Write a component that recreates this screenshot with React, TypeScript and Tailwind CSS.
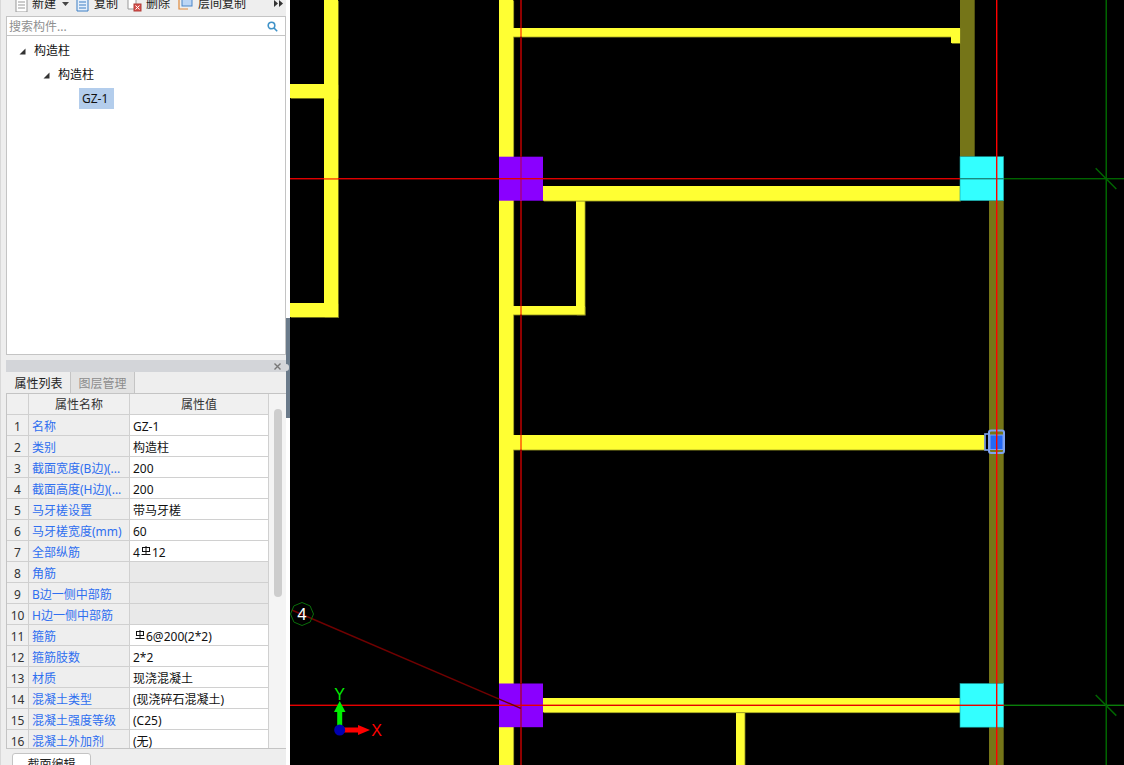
import type { ReactNode } from "react";

// rebar grade mark used in the property values
const Rebar = () => (
    <svg className="inline-block mx-[1px] -mt-[6px]" width="10" height="10" viewBox="0 0 10 10" fill="none" stroke="#111" strokeWidth="1">
        <rect x="1.5" y="1.5" width="7" height="4" />
        <path d="M5 0v9M0.5 8.5h9" />
    </svg>
);

const rows: { name: string; value?: ReactNode; shaded?: boolean }[] = [
    { name: "名称", value: "GZ-1" },
    { name: "类别", value: "构造柱" },
    { name: "截面宽度(B边)(...", value: "200" },
    { name: "截面高度(H边)(...", value: "200" },
    { name: "马牙槎设置", value: "带马牙槎" },
    { name: "马牙槎宽度(mm)", value: "60" },
    { name: "全部纵筋", value: <>4<Rebar />12</> },
    { name: "角筋", shaded: true },
    { name: "B边一侧中部筋", shaded: true },
    { name: "H边一侧中部筋", shaded: true },
    { name: "箍筋", value: <span className="pl-[1px]"><Rebar />6@200(2*2)</span> },
    { name: "箍筋肢数", value: "2*2" },
    { name: "材质", value: "现浇混凝土" },
    { name: "混凝土类型", value: "(现浇碎石混凝土)" },
    { name: "混凝土强度等级", value: "(C25)" },
    { name: "混凝土外加剂", value: "(无)" },
];

const Expander = () => (
    <svg width="7" height="7" viewBox="0 0 7 7">
        <polygon points="6.5,0.5 6.5,6.5 0.5,6.5" fill="#333" />
    </svg>
);

const Toolbar = () => (
    <div className="h-[16px] bg-[#eeeeee] overflow-hidden relative shrink-0">
        <div className="flex items-center -mt-[5px] h-[17px] pl-[13px] text-[#222]">
            <svg width="14" height="16" viewBox="0 0 14 16" className="mr-[4px]">
                <path d="M2 0h11v16H2z" fill="#fff" stroke="#999" />
                <path d="M4 6h7M4 9h7M4 12h7" stroke="#999" />
                <path d="M0 0h2v3H0z" fill="#e8913a" />
            </svg>
            <span>新建</span>
            <svg width="7" height="4" viewBox="0 0 7 4" className="ml-[6px] mt-[1px]">
                <polygon points="0,0 7,0 3.5,4" fill="#444" />
            </svg>
            <svg width="13" height="16" viewBox="0 0 13 16" className="ml-[7px] mr-[5px]">
                <path d="M1 0h11v15H1z" fill="#e6f0fb" stroke="#3d7fc4" />
                <path d="M3 6h7M3 9h7M3 12h7" stroke="#3d7fc4" />
            </svg>
            <span>复制</span>
            <svg width="15" height="16" viewBox="0 0 15 16" className="ml-[9px] mr-[4px]">
                <path d="M1 0h8v13H1z" fill="#fff" stroke="#999" />
                <rect x="7" y="8" width="7" height="7" fill="#d9534f" stroke="#b03a36" />
                <path d="M8.5 9.5l4 4M12.5 9.5l-4 4" stroke="#fff" />
            </svg>
            <span>删除</span>
            <svg width="15" height="16" viewBox="0 0 15 16" className="ml-[8px] mr-[5px]">
                <path d="M1 3v10h9" fill="none" stroke="#e08a3c" strokeWidth="1.2" />
                <rect x="4" y="0" width="10" height="10" fill="#bcd6f5" stroke="#4a86c8" />
            </svg>
            <span>层间复制</span>
        </div>
        <svg width="9" height="7" viewBox="0 0 9 7" className="absolute left-[273px] top-0">
            <polygon points="0,0 4,3.5 0,7" fill="#333" />
            <polygon points="5,0 9,3.5 5,7" fill="#333" />
        </svg>
    </div>
);

const SearchBox = () => (
    <div className="h-[20px] shrink-0 border border-[#c4c4c4] ml-[5px] bg-white flex items-center justify-between pl-[2px] pr-[7px]">
        <span className="text-[#8f8f8f] pt-[2px]">搜索构件...</span>
        <svg width="11" height="11" viewBox="0 0 11 11" fill="none" stroke="#3f92c8" strokeWidth="1.6">
            <circle cx="4.5" cy="4.5" r="3.3" />
            <path d="M7 7l3.2 3.2" />
        </svg>
    </div>
);

const Tree = () => (
    <div className="h-[319px] shrink-0 ml-[5px] bg-white border-x border-b border-[#c4c4c4] pt-[3px] text-[#111]">
        <div className="flex items-center h-[24px] pl-[12px] gap-[8px]"><Expander /><span>构造柱</span></div>
        <div className="flex items-center h-[24px] pl-[36px] gap-[8px]"><Expander /><span>构造柱</span></div>
        <div className="pl-[72px] pt-[1px]">
            <div className="w-[35px] h-[21px] bg-[#b3cdec] pl-[3px] leading-[21px]">GZ-1</div>
        </div>
    </div>
);

const PropertyPanel = () => (
    <div className="flex-1 min-h-0 mt-[5px] ml-[5px] flex flex-col">
        <div className="h-[12px] shrink-0 bg-[#d3d5d9] flex items-center justify-end pr-[5px]">
            <svg width="7" height="7" viewBox="0 0 7 7" stroke="#777" strokeWidth="1.4">
                <path d="M0.5 0.5l6 6M6.5 0.5l-6 6" />
            </svg>
        </div>
        <div className="h-[22px] shrink-0 flex border-b border-[#c4c4c4] bg-[#eeeeee] pl-[1px]">
            <div className="w-[64px] text-center leading-[24px] text-[#222] border-r border-[#c4c4c4]">属性列表</div>
            <div className="w-[64px] text-center leading-[24px] text-[#8c8c8c] bg-[#e2e2e2] border-r border-[#c4c4c4]">图层管理</div>
        </div>
        <div className="h-[355px] shrink-0 flex border-b border-l border-[#c4c4c4] overflow-hidden">
            <div className="w-[262px] shrink-0">
                <div className="flex h-[21px] border-b border-r border-[#d0d0d0] bg-[#f0f0f0] text-[#333] leading-[22px]">
                    <div className="w-[22px] shrink-0 border-r border-[#d0d0d0]" />
                    <div className="w-[101px] shrink-0 border-r border-[#d0d0d0] text-center">属性名称</div>
                    <div className="flex-1 text-center">属性值</div>
                </div>
                {rows.map((row, i) => (
                    <div key={row.name} className="flex h-[21px] border-b border-r border-[#d0d0d0] leading-[23px]">
                        <div className="w-[22px] shrink-0 border-r border-[#d0d0d0] bg-[#f0f0f0] text-[#333] text-center">{i + 1}</div>
                        <div className="w-[101px] shrink-0 border-r border-[#d0d0d0] pl-[3px] text-[#2f6ff0] whitespace-nowrap overflow-hidden">{row.name}</div>
                        <div className={`flex-1 pl-[3px] text-[#111] ${row.shaded ? "bg-[#e9e9e9]" : "bg-white"}`}>{row.value}</div>
                    </div>
                ))}
            </div>
            <div className="flex-1 bg-[#f4f4f4] pl-[5px] pt-[15px]">
                <div className="w-[8px] h-[188px] bg-[#cdcdcd] rounded-t-[4px] rounded-b-[4px]" />
            </div>
        </div>
        <div className="flex-1 bg-[#eeeeee] pl-[6px] pt-[4px] overflow-hidden">
            <div className="w-[79px] h-[20px] bg-white border border-[#c4c4c4] rounded-t-[3px] text-center leading-[22px] text-[#222]">截面编辑</div>
        </div>
    </div>
);

// wall segment with the dim edge the CAD view leaves on its right and bottom
const Wall = ({ x, y, w, h }: { x: number; y: number; w: number; h: number }) => (
    <>
        <rect x={x + 0.8} y={y + 0.8} width={w} height={h} fill="#85851f" />
        <rect x={x} y={y} width={w} height={h} fill="#ffff33" />
    </>
);

const Drawing = () => (
    <svg className="block" width="834" height="765" viewBox="290 0 834 765">
        <rect x="290" y="0" width="834" height="765" fill="#000" />

        {/* olive walls */}
        <rect x="960" y="0" width="14.7" height="157" fill="#757518" />
        <rect x="989" y="200" width="14.7" height="565" fill="#757518" />

        {/* yellow walls */}
        <Wall x={499} y={0} w={14.3} h={765} />
        <Wall x={290} y={84} w={48} h={14} />
        <Wall x={290} y={303} w={48} h={14} />
        <Wall x={324} y={0} w={14} h={317} />
        <Wall x={513} y={28} w={447} h={8.7} />
        <Wall x={951} y={28} w={9} h={15} />
        <Wall x={576} y={200} w={8.7} h={114.6} />
        <Wall x={543} y={186} w={417} h={14.7} />
        <Wall x={513} y={306} w={71.7} h={8.6} />
        <Wall x={513} y={435} w={471} h={14.7} />
        <Wall x={736} y={712} w={8.6} h={53} />
        <Wall x={543} y={698} w={417} h={14.3} />

        {/* columns */}
        <rect x="499" y="156.7" width="44" height="44" fill="#8a00ff" />
        <rect x="499" y="683.5" width="44" height="43.7" fill="#8a00ff" />
        <rect x="960" y="156.7" width="43.7" height="44" fill="#33ffff" stroke="#1a9a9a" strokeWidth="0.6" />
        <rect x="960" y="683.5" width="43.7" height="43.7" fill="#33ffff" stroke="#1a9a9a" strokeWidth="0.6" />

        {/* selected column */}
        <rect x="985" y="434" width="6" height="16" fill="none" stroke="#7ea2f0" strokeWidth="1.6" />
        <rect x="989" y="430.5" width="15" height="22.5" rx="2" fill="#757518" stroke="#7ea2f0" strokeWidth="2" />
        <rect x="990" y="435" width="13" height="14.5" fill="#2468f5" stroke="#7ea2f0" strokeWidth="1" />

        {/* axis lines */}
        <rect x="1105.5" y="0" width="1.5" height="765" fill="#006400" />
        <rect x="1004" y="178" width="120" height="1.4" fill="#006400" />
        <rect x="1004" y="704.6" width="120" height="1.4" fill="#0a7d0a" />
        <path d="M1095.7 168.3L1116.3 189M1095.7 695L1116.3 715.6" stroke="#006400" strokeWidth="1.5" />

        <rect x="520" y="0" width="2" height="765" fill="#8f0000" />
        <rect x="520" y="28" width="2" height="8.7" fill="#ff8010" />
        <rect x="520" y="306" width="2" height="8.6" fill="#ff8010" />
        <rect x="520" y="435" width="2" height="14.7" fill="#ff8010" />
        <rect x="520" y="157" width="2" height="44" fill="#a000a0" />
        <rect x="520" y="684" width="2" height="43" fill="#a00070" />

        <rect x="290" y="178" width="670" height="1.4" fill="#e00000" />
        <rect x="324" y="178" width="14" height="1.4" fill="#ff6a10" />
        <rect x="960" y="178" width="44" height="1.4" fill="#1a8a80" />
        <rect x="290" y="704.6" width="714" height="1.4" fill="#e60000" />
        <rect x="996" y="0" width="1.4" height="765" fill="#ff0000" />

        {/* axis bubble */}
        <path d="M291.7 610L520.7 708.3" stroke="#700000" strokeWidth="1.4" />
        <polygon points="302,602.5 310.1,605.9 313.5,614 310.1,622.1 302,625.5 293.9,622.1 290.5,614 293.9,605.9" fill="none" stroke="#0a6e0a" />
        <text x="302" y="620" textAnchor="middle" fill="#fff" fontSize="17" fontFamily="'Liberation Sans', sans-serif">4</text>

        {/* UCS marker */}
        <rect x="337.2" y="710" width="5" height="16" fill="#00ee00" />
        <polygon points="339.7,701 345.5,712 334,712" fill="#00ee00" />
        <text x="339.7" y="700" textAnchor="middle" fill="#00ee00" fontSize="16" fontFamily="'Liberation Sans', sans-serif">Y</text>
        <rect x="344" y="727.5" width="15" height="5" fill="#ff0000" />
        <polygon points="370,730 358,725 358,735" fill="#ff0000" />
        <circle cx="339.7" cy="730" r="5.5" fill="#0000b0" />
        <text x="376.5" y="736" textAnchor="middle" fill="#ff0000" fontSize="16" fontFamily="'Liberation Sans', sans-serif">X</text>
    </svg>
);

export default function App() {
    return (
        <div className="w-[1124px] h-[765px] flex overflow-hidden bg-white text-[12px] font-['Noto_Sans','Noto_Sans_CJK_SC',sans-serif]">
            <div className="w-[286px] shrink-0 flex flex-col bg-[#eeeeee] border-l border-[#d8d8d8]">
                <Toolbar />
                <SearchBox />
                <Tree />
                <PropertyPanel />
            </div>
            <div className="w-[4px] shrink-0 bg-white pt-[318px]">
                <div className="h-[100px] bg-[#6b7b8b] relative">
                    <div className="absolute left-0 top-[46px] w-[3px] h-[7px] bg-[#d4d6da] rounded-r-[3px]" />
                </div>
            </div>
            <Drawing />
        </div>
    );
}
